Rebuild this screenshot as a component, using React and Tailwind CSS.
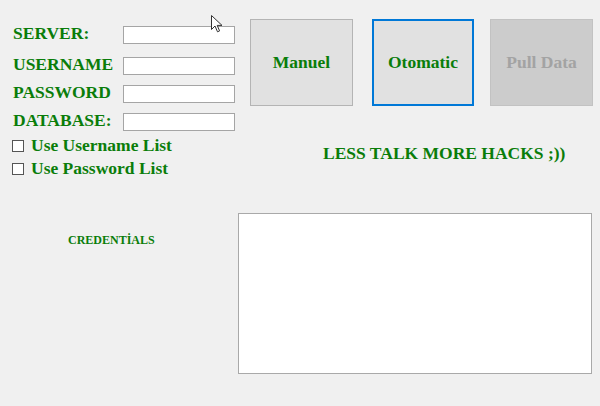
import React from 'react';

const green = 'text-[#0a7d0a]';

const Field = ({ label, className }) => (
  <div className={`flex items-start pl-[13px] ${className}`}>
    <span className={`w-[110px] shrink-0 mt-[1px] text-[17.5px] leading-[12px] font-bold ${green}`}>{label}</span>
    <input className="w-[112px] h-[18px] bg-white border border-[#a5a5a5] outline-none" />
  </div>
);

const Check = ({ label, className }) => (
  <div className={`flex items-start pl-[12px] ${className}`}>
    <span className="w-[12px] h-[12px] mt-[1px] border border-[#555] bg-white shrink-0"></span>
    <span className={`ml-[7px] text-[17.5px] leading-[12px] font-bold ${green}`}>{label}</span>
  </div>
);

const Cursor = () => (
  <svg className="absolute left-[211px] top-[15px]" width="12" height="18" viewBox="0 0 12 18">
    <path d="M0.5 0.5 L0.5 14.5 L4 11 L6.5 16.8 L8.6 15.9 L6.2 10.4 L11 10.4 Z" fill="#fff" stroke="#333" strokeWidth="1" strokeLinejoin="round" />
  </svg>
);

export default function App() {
  return (
    <div className="relative w-[600px] h-[406px] bg-[#f0f0f0] font-['Liberation_Serif','Times_New_Roman',serif] overflow-hidden">
      {/* top area */}
      <div className="flex h-[175px]">
        <div className="w-[240px] shrink-0 flex flex-col">
          <Field label="SERVER:" className="mt-[26px]" />
          <Field label="USERNAME" className="mt-[13px]" />
          <Field label="PASSWORD" className="mt-[10px]" />
          <Field label="DATABASE:" className="mt-[10px]" />
          <Check label="Use Username List" className="mt-[8px]" />
          <Check label="Use Password List" className="mt-[10px]" />
        </div>

        <div className="flex flex-col pt-[19px]">
          <div className="flex ml-[10px]">
            <button className={`w-[103px] h-[87px] bg-[#e1e1e1] border border-[#b4b4b4] text-[17.5px] font-bold ${green}`}>
              Manuel
            </button>
            <button className={`ml-[19px] w-[102px] h-[87px] bg-[#e1e1e1] border-2 border-[#0078d7] text-[17.5px] font-bold ${green}`}>
              Otomatic
            </button>
            <button className="ml-[16px] w-[103px] h-[87px] bg-[#cccccc] border border-[#c2c2c2] text-[17.5px] font-bold text-[#a3a3a3]">
              Pull Data
            </button>
          </div>
          <div className={`mt-[41px] ml-[83px] text-[17.5px] leading-[12px] font-bold whitespace-nowrap ${green}`}>
            LESS TALK MORE HACKS ;))
          </div>
        </div>
      </div>

      {/* bottom area */}
      <div className="flex mt-[38px]">
        <div className="w-[238px] shrink-0 pl-[68px] pt-[21px]">
          <div className={`text-[12px] leading-[12px] font-bold ${green}`}>CREDENTİALS</div>
        </div>
        <textarea className="w-[354px] h-[161px] bg-white border border-[#a9a9a9] resize-none outline-none" />
      </div>

      <Cursor />
    </div>
  );
}
